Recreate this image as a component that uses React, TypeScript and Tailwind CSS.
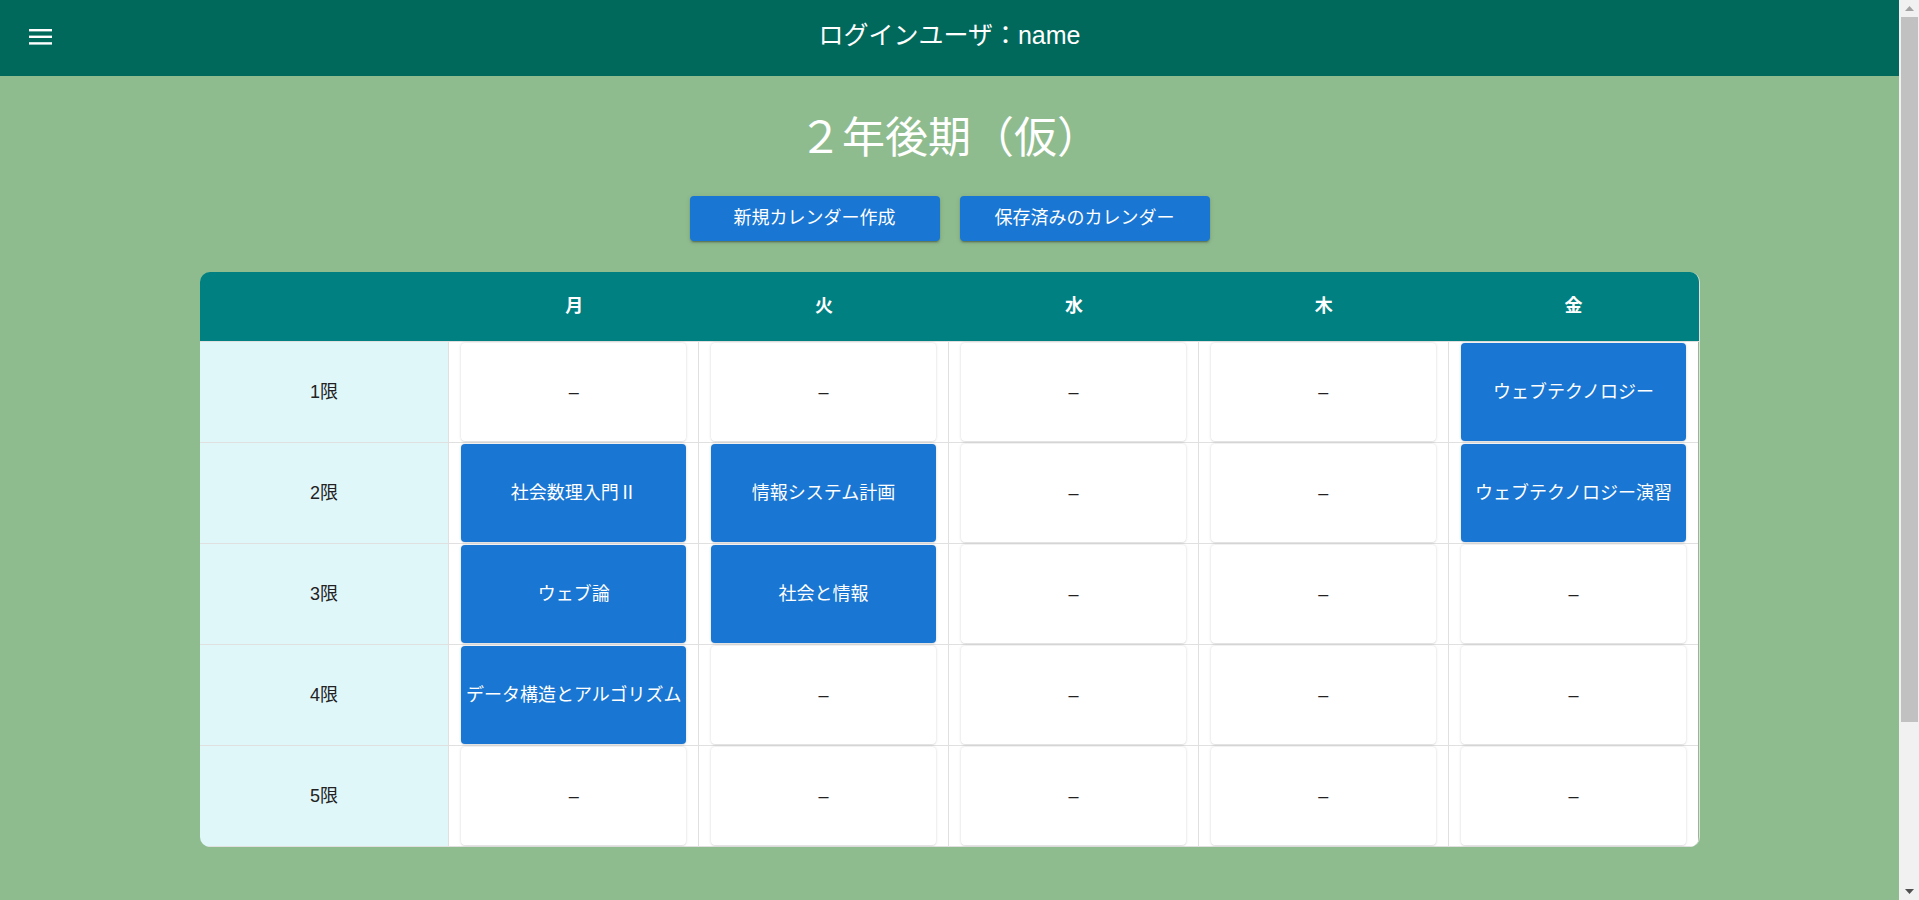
import React from "react";

const days = ["月", "火", "水", "木", "金"];

const timetable: (string | null)[][] = [
  [null, null, null, null, "ウェブテクノロジー"],
  ["社会数理入門Ⅱ", "情報システム計画", null, null, "ウェブテクノロジー演習"],
  ["ウェブ論", "社会と情報", null, null, null],
  ["データ構造とアルゴリズム", null, null, null, null],
  [null, null, null, null, null],
];

function MenuIcon() {
  return (
    <svg width="23" height="16" viewBox="0 0 23 16" fill="#ffffff">
      <rect x="0" y="0" width="23" height="2.4" />
      <rect x="0" y="6.6" width="23" height="2.4" />
      <rect x="0" y="13.2" width="23" height="2.4" />
    </svg>
  );
}

const cardShadow =
  "shadow-[0px_0px_3px_0px_rgba(0,0,0,0.16),0px_1px_1px_0px_rgba(0,0,0,0.06)]";

function Cell({ value, last }: { value: string | null; last: boolean }) {
  return (
    <div
      className={`flex h-[101px] justify-center border-b border-[#e0e0e0] bg-white py-px pl-[12px] pr-[12px] ${
        last ? "border-r-0" : "border-r"
      }`}
    >
      {value ? (
        <div
          className={`flex w-full items-center justify-center rounded-[4px] bg-[#1976d2] text-[18px] whitespace-nowrap text-white ${cardShadow}`}
        >
          {value}
        </div>
      ) : (
        <div
          className={`flex w-full items-center justify-center rounded-[4px] bg-white text-[18px] text-[#222222] ${cardShadow}`}
        >
          –
        </div>
      )}
    </div>
  );
}

function Scrollbar() {
  return (
    <div className="flex h-full w-[20px] shrink-0 flex-col bg-[#f1f1f1]">
      <div className="flex h-[17px] items-center justify-center">
        <svg width="9" height="5" viewBox="0 0 9 5">
          <path d="M0 5 L4.5 0 L9 5 Z" fill="#a3a3a3" />
        </svg>
      </div>
      <div className="ml-[2px] mr-[1px] h-[705px] bg-[#c1c1c1]" />
      <div className="flex-1" />
      <div className="flex h-[17px] items-center justify-center">
        <svg width="9" height="5" viewBox="0 0 9 5">
          <path d="M0 0 L9 0 L4.5 5 Z" fill="#505050" />
        </svg>
      </div>
    </div>
  );
}

export default function App() {
  return (
    <div
      className="flex h-[900px] overflow-hidden bg-[#8fbc8f]"
      style={{ fontFamily: '"Liberation Sans", "Noto Sans CJK JP", sans-serif' }}
    >
      <div className="min-w-0 flex-1">
        <header className="grid h-[76px] grid-cols-[1fr_auto_1fr] items-center bg-[#00695c]">
          <div className="flex items-center pl-[29px] pb-[3px]">
            <MenuIcon />
          </div>
          <div className="pb-[4px] text-[25px] text-white">ログインユーザ：name</div>
          <div />
        </header>

        <main className="flex flex-col items-center">
          <h1 className="mt-[36px] h-[52px] text-[43px] leading-[52px] font-normal text-white">
            ２年後期（仮）
          </h1>

          <div className="mt-[32px] flex gap-[20px]">
            <button className="h-[45px] w-[250px] rounded-[4px] bg-[#1976d2] text-[18px] text-white shadow-[0px_3px_1px_-2px_rgba(0,0,0,0.2),0px_2px_2px_0px_rgba(0,0,0,0.14),0px_1px_5px_0px_rgba(0,0,0,0.12)]">
              新規カレンダー作成
            </button>
            <button className="h-[45px] w-[250px] rounded-[4px] bg-[#1976d2] text-[18px] text-white shadow-[0px_3px_1px_-2px_rgba(0,0,0,0.2),0px_2px_2px_0px_rgba(0,0,0,0.14),0px_1px_5px_0px_rgba(0,0,0,0.12)]">
              保存済みのカレンダー
            </button>
          </div>

          <div className="mt-[31px] w-[1500px] overflow-hidden rounded-[10px] border-r border-[#e0e0e0]">
            <div className="grid h-[70px] grid-cols-6 items-center border-b border-[#e0e0e0] bg-[#008080]">
              <div />
              {days.map((d) => (
                <div key={d} className="text-center text-[18px] font-bold text-white">
                  {d}
                </div>
              ))}
            </div>
            {timetable.map((row, i) => (
              <div key={i} className="grid grid-cols-6">
                <div className="flex h-[101px] items-center justify-center border-r border-b border-[#e0e0e0] bg-[#e0f7fa] text-[18px] text-[#222222]">
                  {i + 1}限
                </div>
                {row.map((v, j) => (
                  <Cell key={j} value={v} last={j === 4} />
                ))}
              </div>
            ))}
          </div>
        </main>
      </div>
      <Scrollbar />
    </div>
  );
}
